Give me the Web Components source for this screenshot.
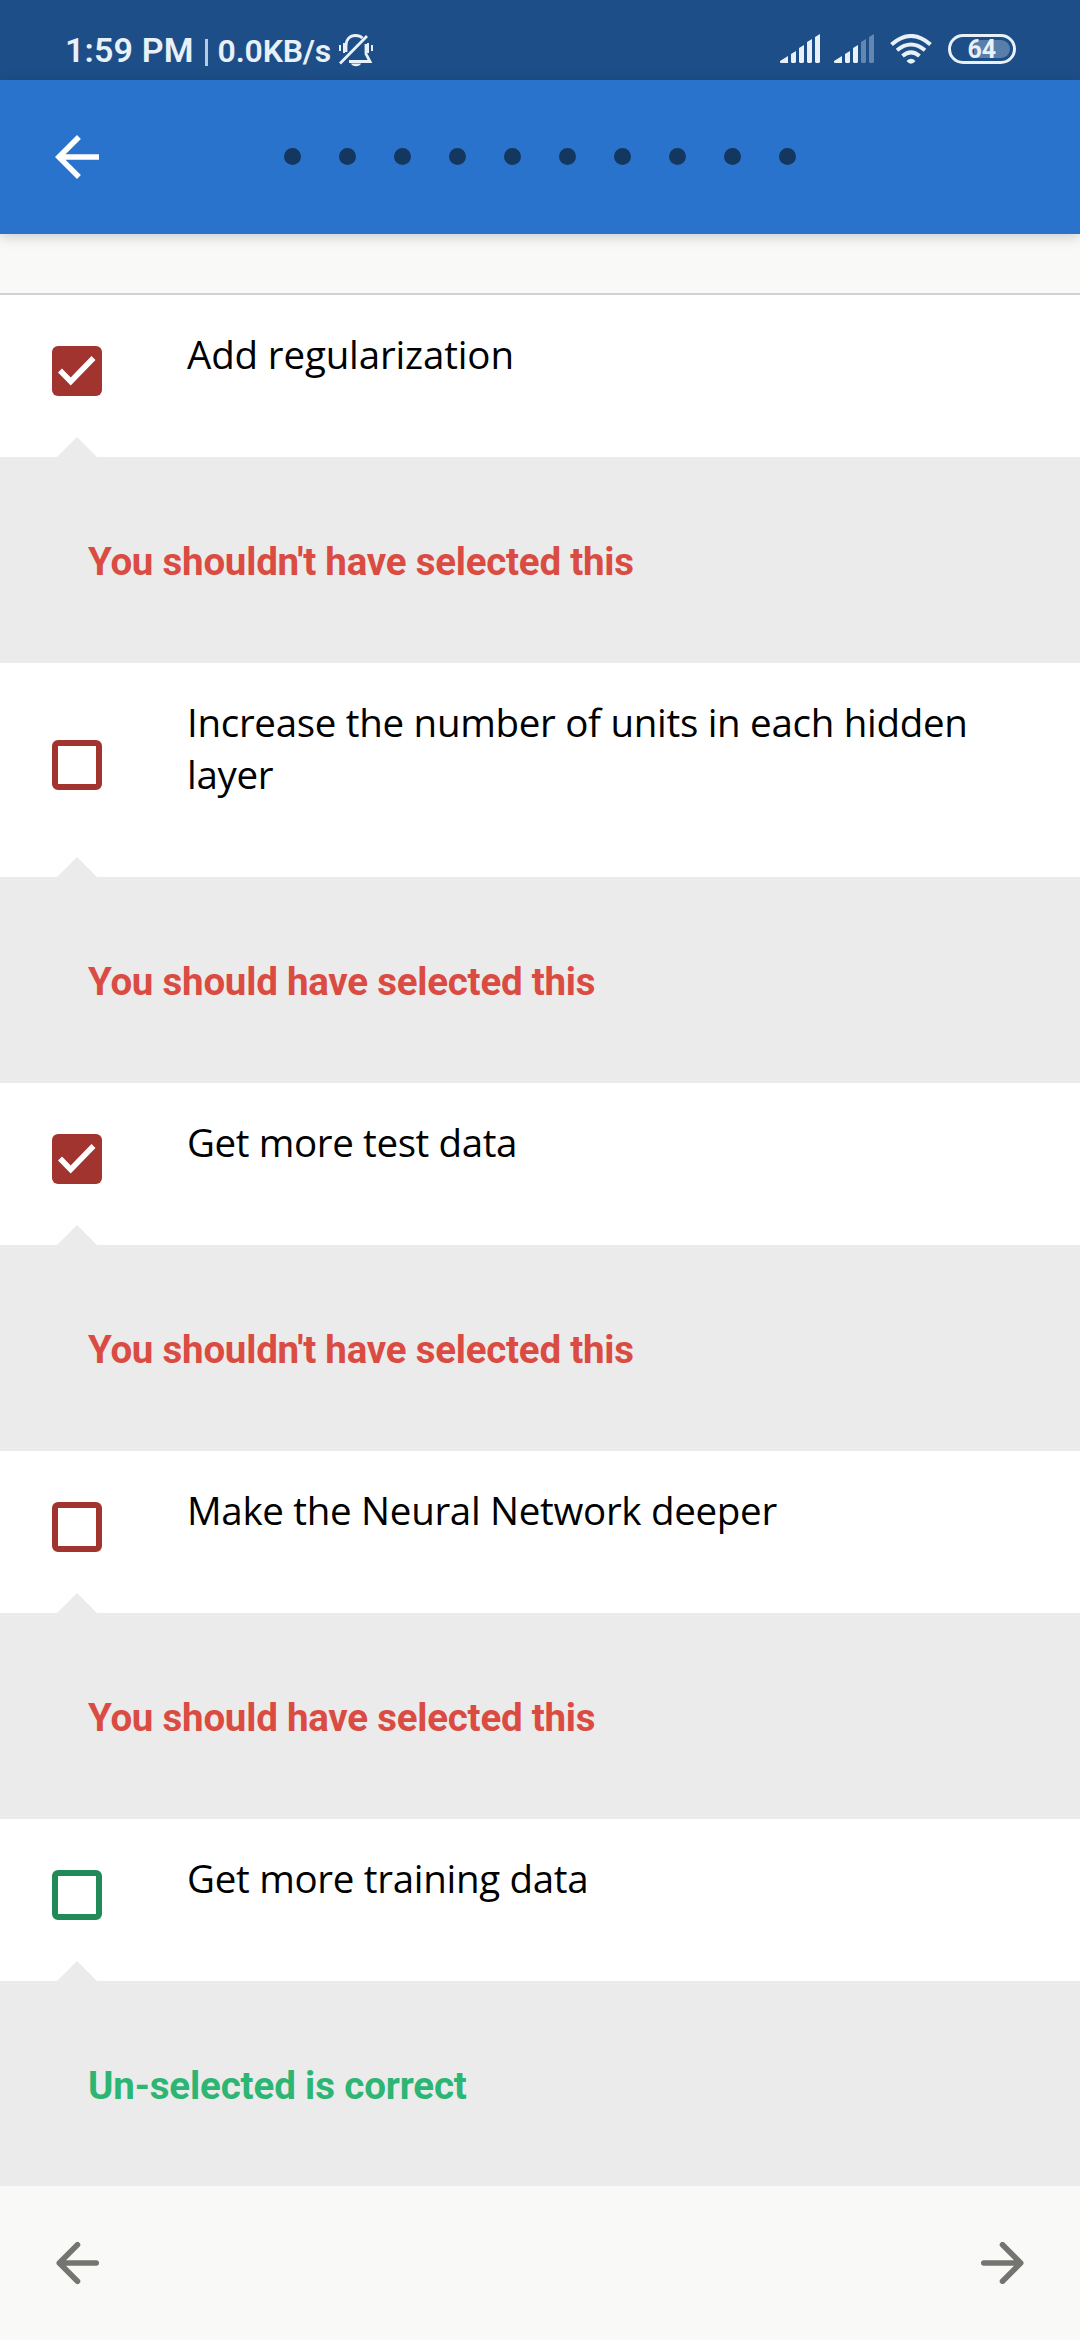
<!DOCTYPE html>
<html lang="en">
<head>
<meta charset="utf-8">
<title>Quiz feedback</title>
<style>
  body { margin: 0; background: #f9f9f7; font-family: "Open Sans", "Noto Sans", sans-serif; }
</style>
</head>
<body>
<quiz-screen></quiz-screen>
<script>
const define = (name, html) => customElements.define(name, class extends HTMLElement {
  constructor() {
    super();
    this.attachShadow({ mode: 'open' }).innerHTML = html;
  }
});

define('status-bar', `
<style>
  :host { display: flex; box-sizing: border-box; height: 80px; padding: 18px 64px 0 65px; align-items: center;
    background: #1d4e87; color: #e8f0f8; font-family: Roboto, sans-serif; font-weight: 600; line-height: 60px; }
  .time { font-size: 34px; letter-spacing: .15px; margin-top: 2px; }
  .bar { width: 3px; height: 27px; margin: 7px 10px 0 11px; background: #b9cbe0; }
  .rate { font-size: 32px; letter-spacing: -.2px; margin-top: 3px; }
  svg { display: block; flex: none; }
  .bell { margin: 1px 0 0 7px; }
  .right { display: flex; margin-left: auto; }
  .b { margin-left: 14px; } .w { margin-left: 15px; } .bat { margin-left: 15px; }
  text { font: 700 25px Roboto, sans-serif; }
</style>
<span class="time">1:59 PM</span><span class="bar"></span><span class="rate">0.0KB/s</span>
<svg class="bell" width="36" height="34" viewBox="0 0 36 34" fill="none" stroke="#e8f0f8" stroke-width="2.8">
  <path d="M8 19V13C8 6 12 2.500 17.500 2.500C20.500 2.500 23 3.500 24.500 5M28 11V21L32 28.500H11M2 30.500L29 3"/>
  <path d="M2 12V18M6 10V20M30 10V20M34 12V18" stroke-width="2"/>
  <path d="M13 30.500H23C22 34 14 34 13 30.500Z" fill="#e8f0f8" stroke="none"/>
</svg>
<div class="right">
  <svg width="40" height="30" viewBox="0 0 40 30" fill="#e8f0f8">
    <path d="M0 27L8 22V29H1Q0 29 0 28ZM11 20L16 17V28L15 29H12L11 28ZM19 14L24 11V28L23 29H20L19 28ZM27 8L32 5V28L31 29H28L27 28ZM35 3L40 0V28L39 29H36L35 28Z"/>
  </svg>
  <svg class="b" width="40" height="30" viewBox="0 0 40 30" fill="#e8f0f8">
    <path d="M0 27L8 22V29H1Q0 29 0 28ZM11 20L16 17V28L15 29H12L11 28ZM19 14L24 11V28L23 29H20L19 28Z"/>
    <path fill="#6487b2" d="M27 8L32 5V28L31 29H28L27 28ZM35 3L40 0V28L39 29H36L35 28Z"/>
  </svg>
  <svg class="w" width="44" height="30" viewBox="0 0 44 30" fill="none" stroke="#e8f0f8" stroke-width="4">
    <path d="M2.500 10.500Q22 -6.500 41.500 10.500M8 16.200Q22 4.800 36 16.200M13.500 22Q22 14.600 30.500 22"/>
    <path d="M17.500 27Q22 22.500 26.500 27Q22 32.500 17.500 27Z" fill="#e8f0f8" stroke="none"/>
  </svg>
  <svg class="bat" width="68" height="30" viewBox="0 0 68 30">
    <path d="M26 6H53A9 9 0 0 1 53 24H26Z" fill="#587ea9"/>
    <rect x="1.500" y="1.500" width="65" height="27" rx="13.500" fill="none" stroke="#e8f0f8" stroke-width="3"/>
    <text x="19.500" y="24" fill="#e8f0f8">64</text>
  </svg>
</div>`);

define('progress-dots', `
<style>
  :host { display: flex; gap: 38px; }
  i { width: 17px; height: 17px; border-radius: 50%; background: #14375f; }
</style>` + '<i></i>'.repeat(10));

define('app-bar', `
<style>
  :host { display: grid; grid-template-columns: 110px 1fr 110px; box-sizing: border-box; height: 154px; align-items: center;
    background: #2a73cc; box-shadow: 0 3px 12px rgba(0,0,0,.18); }
  svg { display: block; margin-left: 44px; }
  progress-dots { justify-self: center; margin-bottom: 1px; }
</style>
<svg width="66" height="66" viewBox="0 0 24 24" fill="#fff"><path d="M20 11H7.830l5.590-5.590L12 4l-8 8 8 8 1.410-1.410L7.830 13H20v-2z"/></svg>
<progress-dots></progress-dots>`);

define('check-box', `
<style>
  :host { display: block; box-sizing: border-box; width: 50px; height: 50px; border: 6px solid var(--c, #a2342f); border-radius: 6px; }
  :host([checked]) { border: 0; background: #a2342f; }
  svg { display: none; }
  :host([checked]) svg { display: block; }
</style>
<svg width="50" height="50" viewBox="0 0 50 50" fill="none" stroke="#fff" stroke-width="5.500"><path d="M8 24.500L18.700 35.500L41.500 12"/></svg>`);

define('answer-option', `
<style>
  :host { display: block; }
  .row { display: flex; align-items: center; background: #fff; padding: 33px 80px 0 52px; }
  check-box { flex: none; margin-bottom: 43px; }
  .label { margin-left: 85px; padding-bottom: 77px; color: #000;
    font: 38.500px/52px "Open Sans", sans-serif; letter-spacing: var(--tracking, -.3px); }
  .tip { width: 40px; height: 20px; margin: -20px 0 0 57px; background: #ebebeb; clip-path: polygon(50% 0, 100% 100%, 0 100%); }
  .feedback { display: flex; align-items: center; height: 206px; box-sizing: border-box; padding: 4px 88px 0; background: #ebebeb;
    color: var(--f, #da4c42); font: 700 38.500px/52px Roboto, sans-serif; letter-spacing: -.24px; }
  :host([correct]) { --c: #228a58; --f: #2db574; }
  :host([correct]) .feedback { letter-spacing: -.14px; }
  :host([last]) .feedback { height: 205px; padding-top: 5px; }
</style>
<div class="row"><check-box></check-box><div class="label"><slot></slot></div></div>
<div class="tip"></div>
<div class="feedback"><span><slot name="feedback"></slot></span></div>`);

define('nav-arrow', `
<style>:host { display: block; } :host([next]) { transform: scaleX(-1); } svg { display: block; }</style>
<svg width="44" height="44" viewBox="0 0 44 44" fill="none" stroke="#747471" stroke-width="5.600" stroke-linecap="round" stroke-linejoin="round"><path d="M40.200 22H4M21.500 3.800L3.300 22L21.500 40.200"/></svg>`);

define('bottom-nav', `
<style>:host { display: flex; justify-content: space-between; align-items: center; height: 154px; padding: 0 56px; background: #f9f9f7; }</style>
<nav-arrow></nav-arrow><nav-arrow next></nav-arrow>`);

define('quiz-screen', `
<style>
  :host { display: flex; flex-direction: column; width: 1080px; height: 2340px; overflow: hidden; }
  .gap { height: 59px; border-bottom: 2px solid #d2d2d2; }
</style>
<status-bar></status-bar><app-bar></app-bar><div class="gap"></div>
<answer-option selected style="--tracking: -.15px">Add regularization<span slot="feedback">You shouldn't have selected this</span></answer-option>
<answer-option>Increase the number of units in each hidden layer<span slot="feedback">You should have selected this</span></answer-option>
<answer-option selected style="--tracking: -.38px">Get more test data<span slot="feedback">You shouldn't have selected this</span></answer-option>
<answer-option>Make the Neural Network deeper<span slot="feedback">You should have selected this</span></answer-option>
<answer-option correct last>Get more training data<span slot="feedback">Un-selected is correct</span></answer-option>
<bottom-nav></bottom-nav>`);

for (const option of document.querySelector('quiz-screen').shadowRoot.querySelectorAll('[selected]'))
  option.shadowRoot.querySelector('check-box').setAttribute('checked', '');
</script>
</body>
</html>
